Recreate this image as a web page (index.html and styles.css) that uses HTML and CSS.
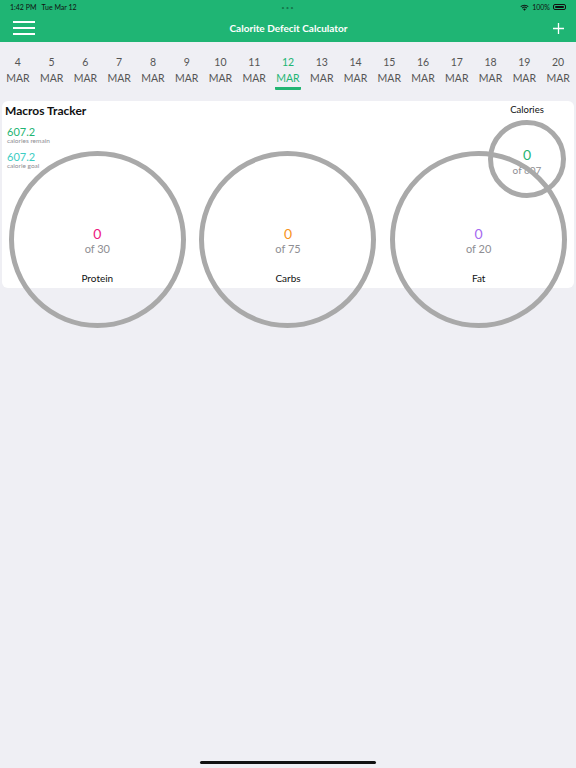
FILE: index.html
```html
<!doctype html>
<html>
<head>
    <meta name="viewport" content="width=device-width, initial-scale=1.0">
    <title>Calorite Defecit Calculator</title>
    <link rel="stylesheet" href="styles.css">
</head>
<body>

<header class="topbar">
    <div class="status">
        <span class="status-left">1:42 PM&nbsp;&nbsp;&nbsp;Tue Mar 12</span>
        <span class="status-dots">&bull;&bull;&bull;</span>
        <span class="status-right">
            <svg width="9" height="7" viewBox="0 0 18 14"><path d="M9 13.5 L6.3 10.4 A4 4 0 0 1 11.7 10.4 Z M3.6 7.6 A7.8 7.8 0 0 1 14.4 7.6 L13 9.2 A5.7 5.7 0 0 0 5 9.2 Z M0.8 4.6 A12 12 0 0 1 17.2 4.6 L15.8 6.2 A9.9 9.9 0 0 0 2.2 6.2 Z" fill="#111"/></svg>
            100%
            <span class="battery"><span class="battery-fill"></span></span>
        </span>
    </div>
    <div class="navbar">
        <span class="menu"><i></i><i></i><i></i></span>
        <span class="nav-title">Calorite Defecit Calculator</span>
        <span class="nav-right">
            <svg width="11" height="11" viewBox="0 0 11 11"><path d="M5.5 0V11M0 5.5H11" stroke="#fff" stroke-width="1.3"/></svg>
        </span>
    </div>
</header>

<nav class="dates">
    <div class="day"><b>4</b><span>MAR</span></div>
    <div class="day"><b>5</b><span>MAR</span></div>
    <div class="day"><b>6</b><span>MAR</span></div>
    <div class="day"><b>7</b><span>MAR</span></div>
    <div class="day"><b>8</b><span>MAR</span></div>
    <div class="day"><b>9</b><span>MAR</span></div>
    <div class="day"><b>10</b><span>MAR</span></div>
    <div class="day"><b>11</b><span>MAR</span></div>
    <div class="day active"><b>12</b><span>MAR</span></div>
    <div class="day"><b>13</b><span>MAR</span></div>
    <div class="day"><b>14</b><span>MAR</span></div>
    <div class="day"><b>15</b><span>MAR</span></div>
    <div class="day"><b>16</b><span>MAR</span></div>
    <div class="day"><b>17</b><span>MAR</span></div>
    <div class="day"><b>18</b><span>MAR</span></div>
    <div class="day"><b>19</b><span>MAR</span></div>
    <div class="day"><b>20</b><span>MAR</span></div>
</nav>

<section class="card">
    <div class="card-top">
        <div class="summary">
            <h2>Macros Tracker</h2>
            <div class="stat remain"><b>607.2</b><span>calories remain</span></div>
            <div class="stat goal"><b>607.2</b><span>calorie goal</span></div>
        </div>
        <div class="calories">
            <div class="cal-label">Calories</div>
            <div class="cal-value">0</div>
            <div class="cal-of">of 607</div>
            <div class="ring small"></div>
        </div>
    </div>

    <div class="macros">
        <div class="macro protein">
            <div class="m-value">0</div>
            <div class="m-of">of 30</div>
            <div class="m-label">Protein</div>
            <div class="ring"></div>
        </div>
        <div class="macro carbs">
            <div class="m-value">0</div>
            <div class="m-of">of 75</div>
            <div class="m-label">Carbs</div>
            <div class="ring"></div>
        </div>
        <div class="macro fat">
            <div class="m-value">0</div>
            <div class="m-of">of 20</div>
            <div class="m-label">Fat</div>
            <div class="ring"></div>
        </div>
    </div>
</section>

<div class="home-bar"></div>

</body>
</html>
```

FILE: styles.css
```css
body {
    margin: 0;
    min-height: 100vh;
    display: flex;
    flex-direction: column;
    background: #efeff4;
    font-family: Lato, "Noto Sans", sans-serif;
    color: #111;
}

.topbar {
    background: #1fb574;
}
.status {
    height: 14px;
    display: flex;
    align-items: center;
    justify-content: space-between;
    padding: 0 10px;
    font-size: 7px;
    color: #111;
}
.status-left, .status-right {
    width: 100px;
}
.status-right {
    display: flex;
    align-items: center;
    justify-content: flex-end;
    gap: 3px;
}
.status-dots {
    font-size: 6px;
    letter-spacing: 1px;
    color: rgba(0,0,0,0.35);
}
.battery {
    width: 13px;
    height: 6px;
    border: 1px solid #111;
    border-radius: 2px;
    padding: 1px;
    box-sizing: border-box;
    display: flex;
}
.battery-fill {
    flex: 1;
    background: #111;
    border-radius: 1px;
}

.navbar {
    height: 28px;
    display: flex;
    align-items: center;
    justify-content: space-between;
    padding: 0 12px 0 13px;
}
.menu, .nav-right {
    width: 22px;
}
.menu {
    display: flex;
    flex-direction: column;
    gap: 4px;
}
.menu i {
    display: block;
    height: 2px;
    background: #fff;
}
.nav-right {
    display: flex;
    justify-content: flex-end;
}
.nav-title {
    color: #fff;
    font-size: 10px;
    font-weight: 700;
}

.dates {
    display: grid;
    grid-template-columns: repeat(17, 1fr);
    padding: 12px 1px 0;
    height: 38px;
}
.day {
    display: flex;
    flex-direction: column;
    align-items: center;
    color: #555;
    font-size: 10.5px;
}
.day b {
    font-weight: 400;
    line-height: 16px;
}
.day span {
    line-height: 16px;
}
.day.active {
    color: #22b573;
}
.day.active span {
    border-bottom: 3px solid #22b573;
    border-radius: 0 0 1px 1px;
    padding: 0 1px;
    line-height: 17px;
}

.card {
    margin: 9px 2px 0;
    background: #fff;
    border-radius: 6px;
    padding-bottom: 4px;
}
.card-top {
    display: flex;
    justify-content: space-between;
}
.summary {
    padding: 2px 0 0 3px;
}
.summary h2 {
    margin: 0;
    font-size: 12px;
    line-height: 16px;
    font-weight: 700;
}
.stat {
    margin-top: 8px;
    padding-left: 2px;
}
.stat b {
    display: block;
    font-weight: 400;
    font-size: 11px;
    line-height: 10px;
}
.stat span {
    display: block;
    font-size: 6.5px;
    line-height: 7px;
    color: #8e8e93;
}
.remain b {
    color: #1fb573;
}
.goal b {
    color: #3ccdc3;
}

.calories {
    position: relative;
    width: 80px;
    margin-right: 7px;
    text-align: center;
    padding-top: 2px;
}
.cal-label {
    font-size: 9.5px;
    line-height: 14px;
}
.cal-value {
    margin-top: 30px;
    font-size: 14px;
    line-height: 16px;
    color: #1fb573;
}
.cal-of {
    margin-top: 1px;
    font-size: 10px;
    line-height: 12px;
    color: #8e8e93;
}

.ring {
    position: absolute;
    left: 50%;
    width: 177px;
    height: 177px;
    margin-left: -88.5px;
    top: -75.5px;
    box-sizing: border-box;
    border: 5px solid #a9a9a9;
    border-radius: 50%;
}
.ring.small {
    width: 78px;
    height: 78px;
    margin-left: -39px;
    top: 19px;
}

.macros {
    display: grid;
    grid-template-columns: repeat(3, 1fr);
    margin-top: 50px;
}
.macro {
    position: relative;
    text-align: center;
}
.m-value {
    font-size: 14px;
    line-height: 16px;
}
.m-of {
    margin-top: 1px;
    font-size: 11px;
    line-height: 12px;
    color: #8e8e93;
}
.m-label {
    margin-top: 17px;
    font-size: 10px;
    line-height: 12px;
}
.protein .m-value {
    color: #ec1780;
}
.carbs .m-value {
    color: #f7941d;
}
.fat .m-value {
    color: #a66af0;
}

.home-bar {
    margin: auto auto 4px;
    width: 176px;
    height: 3px;
    border-radius: 2px;
    background: #111;
}
```
